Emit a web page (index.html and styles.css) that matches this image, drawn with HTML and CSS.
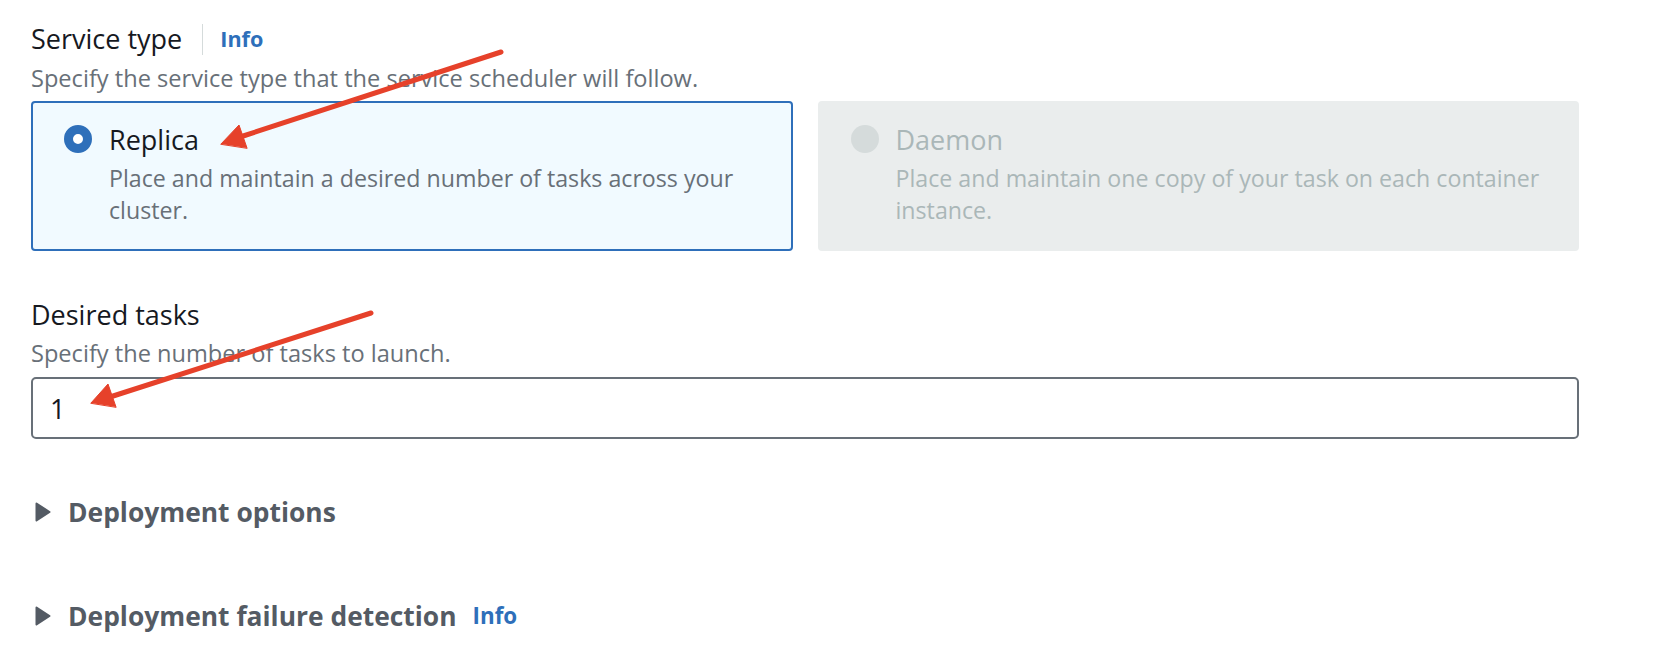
FILE: index.html
```html
<!DOCTYPE html>
<html lang="en">
<head>
<meta charset="utf-8">
<title>Service type</title>
<link rel="stylesheet" href="styles.css">
</head>
<body>
<main class="page">
  <section class="field">
    <div class="label-row">
      <span class="label">Service type</span>
      <span class="divider"></span>
      <a class="info">Info</a>
    </div>
    <p class="desc">Specify the service type that the service scheduler will follow.</p>
    <div class="tiles">
      <div class="tile tile-selected">
        <span class="radio radio-on"></span>
        <div class="tile-body">
          <div class="tile-title">Replica</div>
          <div class="tile-desc">Place and maintain a desired number of tasks across your cluster.</div>
        </div>
      </div>
      <div class="tile tile-disabled">
        <span class="radio radio-off"></span>
        <div class="tile-body">
          <div class="tile-title">Daemon</div>
          <div class="tile-desc">Place and maintain one copy of your task on each container instance.</div>
        </div>
      </div>
    </div>
  </section>

  <section class="field field-tasks">
    <div class="label-row">
      <span class="label">Desired tasks</span>
    </div>
    <p class="desc">Specify the number of tasks to launch.</p>
    <div class="input">1</div>
  </section>

  <div class="expander exp-options">
    <svg class="caret" width="16" height="20" viewBox="0 0 16 20"><polygon points="1.5,1.5 14.5,10 1.5,18.5" fill="#545b64" stroke="#545b64" stroke-width="2" stroke-linejoin="round"/></svg>
    <span class="exp-title">Deployment options</span>
  </div>

  <div class="expander exp-failure">
    <svg class="caret" width="16" height="20" viewBox="0 0 16 20"><polygon points="1.5,1.5 14.5,10 1.5,18.5" fill="#545b64" stroke="#545b64" stroke-width="2" stroke-linejoin="round"/></svg>
    <span class="exp-title">Deployment failure detection</span>
    <a class="info info-small">Info</a>
  </div>
</main>

<svg class="annotations" width="1670" height="666" viewBox="0 0 1670 666">
  <g stroke="#e6412a" stroke-width="5" stroke-linecap="round" fill="#e6412a">
    <line x1="501" y1="52" x2="240" y2="137"/>
    <polygon points="221,144 239,125 247,148" stroke-width="1" stroke-linejoin="round"/>
    <line x1="371" y1="313" x2="110" y2="397"/>
    <polygon points="91,403 108,384 116,407" stroke-width="1" stroke-linejoin="round"/>
  </g>
</svg>
</body>
</html>
```
FILE: styles.css
```css
html, body {
  margin: 0;
  padding: 0;
  background: #ffffff;
}

body {
  font-family: "Open Sans", "Noto Sans", Arial, sans-serif;
  color: #16191f;
  width: 1670px;
  height: 666px;
  overflow: hidden;
  position: relative;
}

.page {
  padding: 23px 91px 0 31px;
}

.label-row {
  display: flex;
  align-items: center;
  height: 32px;
}

.label {
  font-size: 27px;
  line-height: 32px;
  color: #16191f;
}

.divider {
  width: 1px;
  height: 31px;
  background: #d5dbdb;
  margin: 0 17px 0 20px;
}

.info {
  font-size: 21.6px;
  font-weight: 700;
  color: #2e6fba;
  line-height: 32px;
}

.desc {
  margin: 8px 0 0 0;
  font-size: 23.6px;
  line-height: 30px;
  color: #687078;
}

.tiles {
  display: grid;
  grid-template-columns: 1fr 1fr;
  gap: 25px;
  margin-top: 8px;
}

.tile {
  display: flex;
  align-items: flex-start;
  gap: 17px;
  border: 2px solid transparent;
  border-radius: 4px;
  padding: 21px 12px 23px 31px;
}

.tile-selected {
  background: #f1faff;
  border-color: #2e6fba;
}

.tile-disabled {
  background: #eaeded;
  border-color: #eaeded;
}

.radio {
  flex: none;
  width: 28px;
  height: 28px;
  border-radius: 50%;
  box-sizing: border-box;
  margin-top: 1px;
}

.radio-on {
  border: 9px solid #2e6fba;
  background: #ffffff;
}

.radio-off {
  background: #d5dbdb;
}

.tile-title {
  font-size: 27px;
  line-height: 32px;
}

.tile-desc {
  margin-top: 6px;
  font-size: 23.2px;
  line-height: 32px;
  color: #687078;
}

.tile-disabled .tile-title,
.tile-disabled .tile-desc {
  color: #aab7b8;
}

.field-tasks {
  margin-top: 48px;
}

.field-tasks .desc {
  margin-top: 7px;
}

.input {
  margin-top: 9px;
  height: 62px;
  box-sizing: border-box;
  border: 2px solid #687078;
  border-radius: 5px;
  padding: 0 17px;
  display: flex;
  align-items: center;
  font-size: 27px;
  color: #16191f;
}

.expander {
  display: flex;
  align-items: center;
  height: 32px;
}

.exp-options {
  margin-top: 57px;
}

.exp-failure {
  margin-top: 72px;
}

.caret {
  margin: 0 17px 0 4px;
}

.exp-title {
  font-size: 26.4px;
  font-weight: 700;
  color: #545b64;
  line-height: 32px;
}

.info-small {
  margin-left: 16px;
  font-size: 22.4px;
}

.annotations {
  position: absolute;
  left: 0;
  top: 0;
  pointer-events: none;
}
```
